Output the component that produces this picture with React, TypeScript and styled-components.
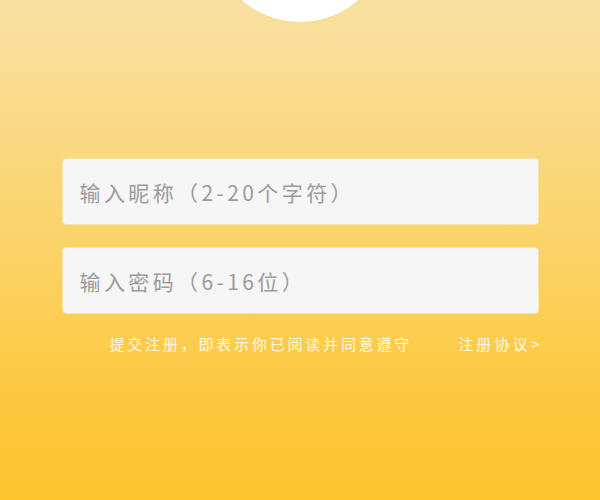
import styled, { createGlobalStyle } from "styled-components";

const GlobalStyle = createGlobalStyle`
  html, body {
    margin: 0;
    padding: 0;
  }
  body {
    font-family: "Noto Sans CJK SC", "Noto Sans", sans-serif;
  }
`;

const Page = styled.div`
  width: 600px;
  height: 500px;
  overflow: hidden;
  display: flex;
  flex-direction: column;
  align-items: center;
  background: linear-gradient(180deg, #f8e0a2 0%, #f9da86 25%, #fbd160 55%, #fdc83f 80%, #fec52f 100%);
`;

const Avatar = styled.div`
  width: 176px;
  height: 176px;
  margin-top: -154px;
  border-radius: 50%;
  background: #ffffff;
  flex-shrink: 0;
`;

const Form = styled.div`
  width: 477px;
  margin-top: 136px;
  display: flex;
  flex-direction: column;
  gap: 22px;
`;

const Field = styled.input`
  box-sizing: border-box;
  width: 100%;
  height: 67px;
  padding: 0 17px;
  border: 1px solid #f3e3b0;
  border-radius: 4px;
  background: #f6f6f6;
  font-family: inherit;
  font-size: 21px;
  letter-spacing: 3.4px;
  color: #555;
  outline: none;

  &::placeholder {
    color: #9b9b9b;
  }
`;

const Agreement = styled.div`
  display: flex;
  justify-content: space-between;
  align-items: center;
  padding-left: 48px;
  margin-top: -2px;
  font-size: 15px;
  line-height: 20px;
  letter-spacing: 2.8px;
  color: #fff8e6;
`;

const Link = styled.a`
  color: #fff8e6;
  text-decoration: none;
  letter-spacing: 3.2px;
  margin-right: -4px;
`;

export default function App() {
  return (
    <>
      <GlobalStyle />
      <Page>
        <Avatar />
        <Form>
          <Field placeholder="输入昵称（2-20个字符）" />
          <Field type="password" placeholder="输入密码（6-16位）" />
          <Agreement>
            <span>提交注册，即表示你已阅读并同意遵守</span>
            <Link href="#">注册协议&gt;</Link>
          </Agreement>
        </Form>
      </Page>
    </>
  );
}
